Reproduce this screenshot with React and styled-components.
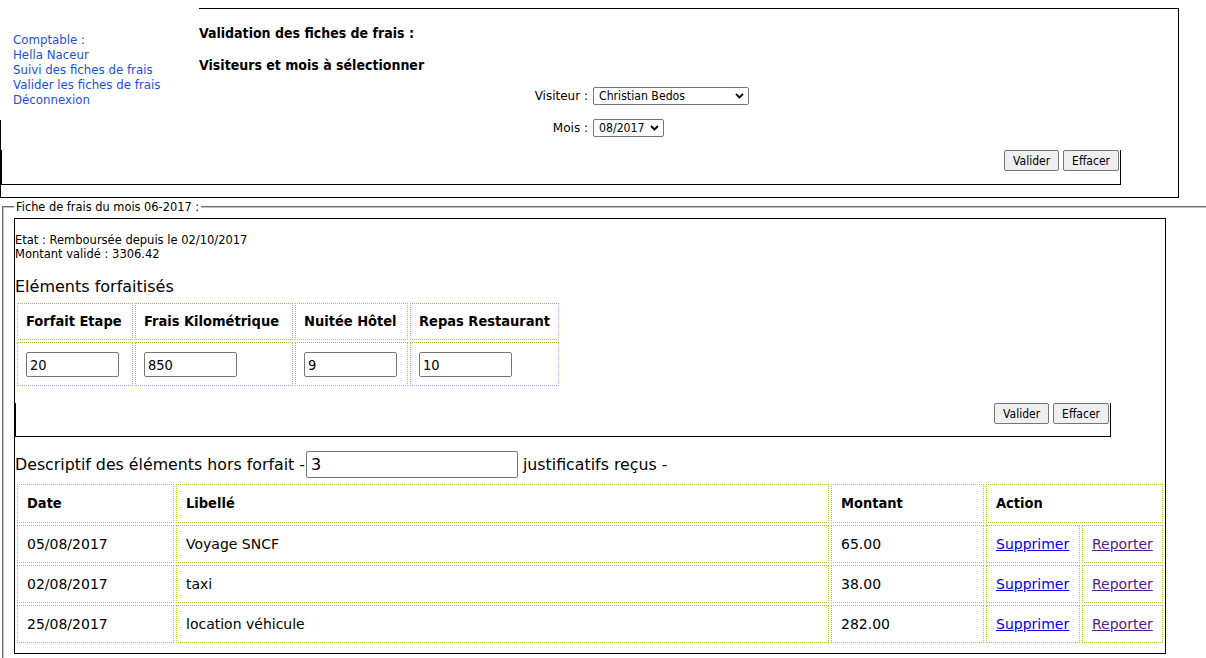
import React from "react";
import styled, { createGlobalStyle } from "styled-components";

const SANS = `"DejaVu Sans", "Liberation Sans", sans-serif`;
const COND = `"DejaVu Sans Condensed", "DejaVu Sans", sans-serif`;
const DOT = "#b3c63a";

const GlobalStyle = createGlobalStyle`
  html, body {
    margin: 0;
    padding: 0;
    overflow: hidden;
    background: #fff;
  }
  body {
    font-family: ${SANS};
    font-size: 12px;
    color: #000;
  }
`;

const Page = styled.div`
  display: flow-root;
  width: 1206px;
`;

const Top = styled.div`
  display: flow-root;
`;

const Nav = styled.nav`
  float: left;
  width: 199px;
  height: 120px;
  box-sizing: border-box;
  padding: 33px 0 0 13px;
  background: #fff;
`;

const NavItem = styled.a`
  display: block;
  line-height: 15px;
  font-family: ${SANS};
  font-size: 11.8px;
  color: #1c4fd6;
  text-decoration: none;
`;

const Panel = styled.section`
  margin-top: 8px;
  width: 1179px;
  height: 190px;
  box-sizing: border-box;
  border: 1px solid #000;
  padding-top: 16px;
`;

const Title = styled.h2`
  margin: 0 0 ${(p) => p.$mb}px;
  font-family: ${COND};
  font-size: 14px;
  line-height: 17px;
  font-weight: bold;
`;

const Field = styled.div`
  padding-left: 386px;
  height: 18px;
  line-height: 18px;
  font-family: ${SANS};
  font-size: 12px;
  & + & {
    margin-top: 14px;
  }
`;

const FieldLabel = styled.label`
  display: inline-block;
  width: 201px;
  margin-right: 5px;
  text-align: right;
  vertical-align: top;
`;

const SelectBox = styled.span`
  display: inline-flex;
  align-items: center;
  vertical-align: top;
  width: ${(p) => p.$w}px;
  height: 18px;
  box-sizing: border-box;
  border: 1px solid #767676;
  border-radius: 2px;
  background: #fff;
  padding-right: 4px;
`;

const NativeSelect = styled.select`
  appearance: none;
  -webkit-appearance: none;
  flex: 1;
  min-width: 0;
  height: 16px;
  border: 0;
  outline: none;
  background: transparent;
  padding: 0 0 0 5px;
  margin: 0;
  font-family: ${COND};
  font-size: 12.2px;
  color: #000;
`;

const Chevron = () => (
  <svg width="9" height="6" viewBox="0 0 9 6" aria-hidden="true">
    <path d="M1 1 L4.5 4.5 L8 1" fill="none" stroke="#000" strokeWidth="1.8" />
  </svg>
);

const ButtonBar = styled.div`
  width: ${(p) => p.$w}px;
  height: ${(p) => p.$h}px;
  margin-top: ${(p) => p.$mt}px;
  box-sizing: border-box;
  border: 1px solid #000;
  border-top: 0;
  display: flex;
  justify-content: flex-end;
  align-items: flex-start;
  gap: 4px;
  padding-right: 1px;
`;

const Button = styled.button`
  height: 21px;
  margin: 0;
  padding: 0 8px;
  border: 1px solid #767676;
  border-radius: 2px;
  background: #efefef;
  color: #000;
  font-family: ${COND};
  font-size: 12px;
`;

const Fieldset = styled.fieldset`
  margin: 2px 0 0 2px;
  width: 1240px;
  min-width: 0;
  padding: 4px 9px 8px 10px;
  border: 2px groove rgb(192, 192, 192);
`;

const Legend = styled.legend`
  padding: 0 2px;
  font-family: ${SANS};
  font-size: 11.4px;
  line-height: 14px;
`;

const Card = styled.div`
  width: 1152px;
  height: 436px;
  box-sizing: border-box;
  border: 1px solid #000;
  padding-top: 14px;
`;

const InfoLine = styled.div`
  font-family: ${SANS};
  font-size: 11.5px;
  line-height: 14px;
`;

const SectionTitle = styled.h3`
  margin: 16px 0 0;
  font-family: ${SANS};
  font-size: 16px;
  line-height: 19px;
  font-weight: normal;
`;

const Table = styled.table`
  border-collapse: separate;
  border-spacing: 2px;
  margin-top: ${(p) => p.$mt}px;
  table-layout: fixed;
  width: ${(p) => p.$w}px;
`;

const Th = styled.th`
  border: 1px dotted ${DOT};
  padding: ${(p) => p.$pad};
  font-family: ${COND};
  font-size: 14.5px;
  line-height: 17px;
  font-weight: bold;
  text-align: left;
  white-space: nowrap;
`;

const Td = styled.td`
  border: 1px dotted ${DOT};
  padding: ${(p) => p.$pad};
  font-family: ${SANS};
  font-size: 14px;
  line-height: 16px;
  text-align: left;
  white-space: nowrap;
`;

const NumInput = styled.input`
  display: block;
  width: 93px;
  height: 25px;
  box-sizing: border-box;
  margin: 0;
  padding: 0 3px;
  border: 1px solid #767676;
  border-radius: 2px;
  font-family: ${COND};
  font-size: 14.5px;
  color: #000;
`;

const JustifRow = styled.div`
  margin-top: 14px;
  display: flex;
  align-items: center;
  height: 27px;
  font-family: ${SANS};
  font-size: 15.8px;
`;

const JustifInput = styled.input`
  width: 212px;
  height: 27px;
  box-sizing: border-box;
  margin: 0 5px 0 1px;
  padding: 0 4px;
  border: 1px solid #767676;
  border-radius: 2px;
  font-family: ${SANS};
  font-size: 16px;
  color: #000;
`;

const ActionLink = styled.a`
  color: ${(p) => (p.$visited ? "#551a8b" : "#0000ee")};
  text-decoration: underline;
  cursor: pointer;
`;

const forfaits = [
  { label: "Forfait Etape", value: "20", w: 116 },
  { label: "Frais Kilométrique", value: "850", w: 158 },
  { label: "Nuitée Hôtel", value: "9", w: 113 },
  { label: "Repas Restaurant", value: "10", w: 149 },
];

const horsForfait = [
  { date: "05/08/2017", libelle: "Voyage SNCF", montant: "65.00" },
  { date: "02/08/2017", libelle: "taxi", montant: "38.00" },
  { date: "25/08/2017", libelle: "location véhicule", montant: "282.00" },
];

export default function App() {
  return (
    <Page>
      <GlobalStyle />
      <Top>
        <Nav>
          <NavItem>Comptable :</NavItem>
          <NavItem>Hella Naceur</NavItem>
          <NavItem href="#">Suivi des fiches de frais</NavItem>
          <NavItem href="#">Valider les fiches de frais</NavItem>
          <NavItem href="#">Déconnexion</NavItem>
        </Nav>
        <Panel>
          <Title $mb={15}>Validation des fiches de frais :</Title>
          <Title $mb={13}>Visiteurs et mois à sélectionner</Title>
          <Field>
            <FieldLabel>Visiteur :</FieldLabel>
            <SelectBox $w={156}>
              <NativeSelect defaultValue="cb">
                <option value="cb">Christian Bedos</option>
              </NativeSelect>
              <Chevron />
            </SelectBox>
          </Field>
          <Field>
            <FieldLabel>Mois :</FieldLabel>
            <SelectBox $w={71}>
              <NativeSelect defaultValue="082017">
                <option value="082017">08/2017</option>
              </NativeSelect>
              <Chevron />
            </SelectBox>
          </Field>
          <ButtonBar $w={1120} $h={35} $mt={13}>
            <Button>Valider</Button>
            <Button>Effacer</Button>
          </ButtonBar>
        </Panel>
      </Top>

      <Fieldset>
        <Legend>Fiche de frais du mois 06-2017 :</Legend>
        <Card>
          <InfoLine>Etat : Remboursée depuis le 02/10/2017</InfoLine>
          <InfoLine>Montant validé : 3306.42</InfoLine>
          <SectionTitle>Eléments forfaitisés</SectionTitle>
          <Table $mt={5} $w={546}>
            <colgroup>
              {forfaits.map((f) => (
                <col key={f.label} style={{ width: f.w }} />
              ))}
            </colgroup>
            <thead>
              <tr>
                {forfaits.map((f) => (
                  <Th key={f.label} $pad="9px 8px">
                    {f.label}
                  </Th>
                ))}
              </tr>
            </thead>
            <tbody>
              <tr>
                {forfaits.map((f) => (
                  <Td key={f.label} $pad="9px 8px 8px">
                    <NumInput defaultValue={f.value} />
                  </Td>
                ))}
              </tr>
            </tbody>
          </Table>
          <ButtonBar $w={1096} $h={34} $mt={15}>
            <Button>Valider</Button>
            <Button>Effacer</Button>
          </ButtonBar>
          <JustifRow>
            Descriptif des éléments hors forfait -
            <JustifInput defaultValue="3" />
            justificatifs reçus -
          </JustifRow>
          <Table $mt={4} $w={1150}>
            <colgroup>
              <col style={{ width: 157 }} />
              <col style={{ width: 653 }} />
              <col style={{ width: 153 }} />
              <col style={{ width: 94 }} />
              <col style={{ width: 81 }} />
            </colgroup>
            <thead>
              <tr>
                <Th $pad="10px 9px">Date</Th>
                <Th $pad="10px 9px">Libellé</Th>
                <Th $pad="10px 9px">Montant</Th>
                <Th $pad="10px 9px" colSpan={2}>
                  Action
                </Th>
              </tr>
            </thead>
            <tbody>
              {horsForfait.map((r) => (
                <tr key={r.date + r.libelle}>
                  <Td $pad="10px 9px">{r.date}</Td>
                  <Td $pad="10px 9px">{r.libelle}</Td>
                  <Td $pad="10px 9px">{r.montant}</Td>
                  <Td $pad="10px 9px">
                    <ActionLink href="#">Supprimer</ActionLink>
                  </Td>
                  <Td $pad="10px 9px">
                    <ActionLink $visited href="#">
                      Reporter
                    </ActionLink>
                  </Td>
                </tr>
              ))}
            </tbody>
          </Table>
        </Card>
      </Fieldset>
    </Page>
  );
}
